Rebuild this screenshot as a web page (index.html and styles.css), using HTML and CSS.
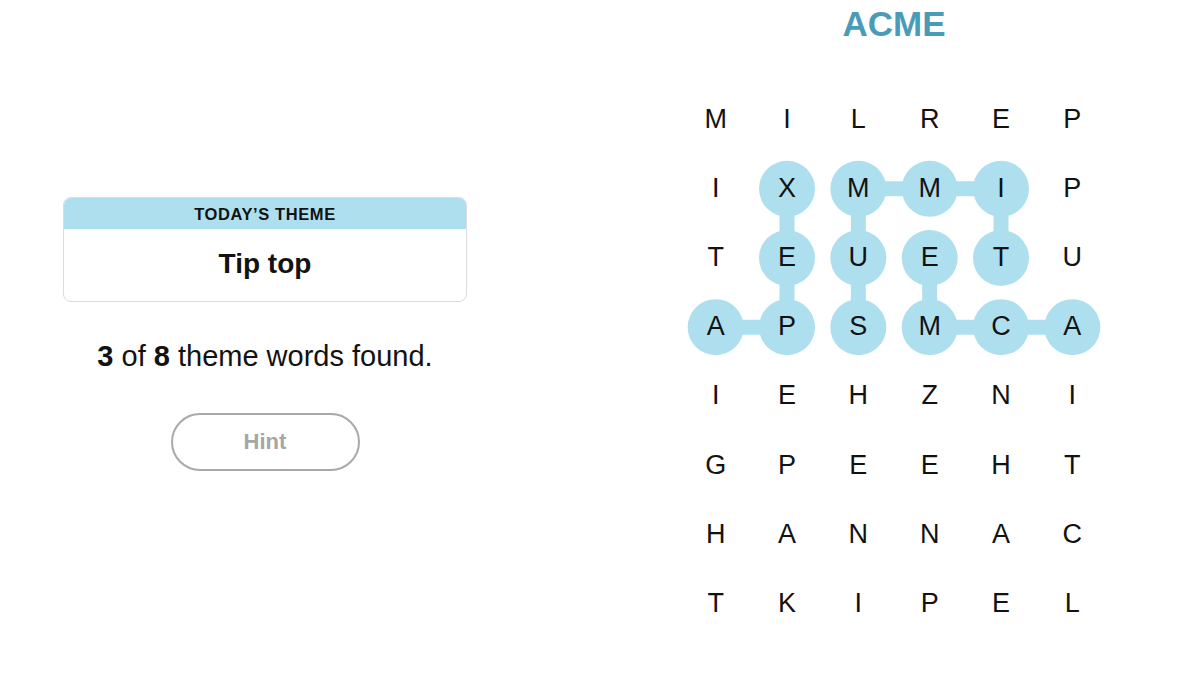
FILE: index.html
```html
<!DOCTYPE html>
<html lang="en">
<head>
<meta charset="utf-8">
<title>Strands</title>
<link rel="stylesheet" href="styles.css">
</head>
<body>
<div class="page">
  <section class="left">
    <div class="theme-card">
      <div class="theme-head">TODAY’S THEME</div>
      <div class="theme-body">Tip top</div>
    </div>
    <p class="progress"><b>3</b> of <b>8</b> theme words found.</p>
    <button class="hint" type="button">Hint</button>
  </section>
  <section class="right">
    <h1 class="title">ACME</h1>
    <div class="board">
      <svg class="paths" viewBox="0 0 428 553.6" width="428" height="553.6" aria-hidden="true">
        <g stroke="#aedfee" stroke-width="15" stroke-linecap="butt">
          <line x1="35.67" y1="242.2" x2="107" y2="242.2"/>
          <line x1="107" y1="242.2" x2="107" y2="103.8"/>
          <line x1="178.33" y1="242.2" x2="178.33" y2="103.8"/>
          <line x1="178.33" y1="103.8" x2="321" y2="103.8"/>
          <line x1="321" y1="103.8" x2="321" y2="173"/>
          <line x1="249.67" y1="173" x2="249.67" y2="242.2"/>
          <line x1="249.67" y1="242.2" x2="392.33" y2="242.2"/>
        </g>
        <g fill="#aedfee">
          <circle cx="107" cy="103.8" r="28"/>
          <circle cx="107" cy="173" r="28"/>
          <circle cx="107" cy="242.2" r="28"/>
          <circle cx="35.67" cy="242.2" r="28"/>
          <circle cx="178.33" cy="242.2" r="28"/>
          <circle cx="178.33" cy="173" r="28"/>
          <circle cx="178.33" cy="103.8" r="28"/>
          <circle cx="249.67" cy="103.8" r="28"/>
          <circle cx="321" cy="103.8" r="28"/>
          <circle cx="321" cy="173" r="28"/>
          <circle cx="249.67" cy="173" r="28"/>
          <circle cx="249.67" cy="242.2" r="28"/>
          <circle cx="321" cy="242.2" r="28"/>
          <circle cx="392.33" cy="242.2" r="28"/>
        </g>
      </svg>
      <div class="letters">
        <span>M</span><span>I</span><span>L</span><span>R</span><span>E</span><span>P</span>
        <span>I</span><span>X</span><span>M</span><span>M</span><span>I</span><span>P</span>
        <span>T</span><span>E</span><span>U</span><span>E</span><span>T</span><span>U</span>
        <span>A</span><span>P</span><span>S</span><span>M</span><span>C</span><span>A</span>
        <span>I</span><span>E</span><span>H</span><span>Z</span><span>N</span><span>I</span>
        <span>G</span><span>P</span><span>E</span><span>E</span><span>H</span><span>T</span>
        <span>H</span><span>A</span><span>N</span><span>N</span><span>A</span><span>C</span>
        <span>T</span><span>K</span><span>I</span><span>P</span><span>E</span><span>L</span>
      </div>
    </div>
  </section>
</div>
</body>
</html>
```

FILE: styles.css
```css
html, body {
  margin: 0;
  padding: 0;
  background: #ffffff;
}

body {
  font-family: "Liberation Sans", Arial, sans-serif;
  color: #121212;
  width: 1200px;
  height: 675px;
  overflow: hidden;
}

.page {
  display: flex;
  width: 1200px;
  height: 675px;
}

.left {
  width: 530px;
  flex: none;
  display: flex;
  flex-direction: column;
  align-items: center;
  padding-top: 197px;
  box-sizing: border-box;
}

.theme-card {
  width: 404px;
  border: 1px solid #dcdcdc;
  border-radius: 8px;
  overflow: hidden;
  box-sizing: border-box;
}

.theme-head {
  background: #aedfee;
  height: 31px;
  line-height: 32px;
  text-align: center;
  font-size: 16.5px;
  font-weight: 700;
  letter-spacing: 0.6px;
  color: #121212;
}

.theme-body {
  height: 72px;
  line-height: 70px;
  text-align: center;
  font-size: 28px;
  font-weight: 700;
}

.progress {
  margin: 38px 0 0;
  font-size: 29px;
  line-height: 32px;
  text-align: center;
}

.progress b {
  font-weight: 700;
}

.hint {
  margin-top: 41px;
  width: 189px;
  height: 58px;
  border: 2px solid #a9a9a9;
  border-radius: 29px;
  background: #ffffff;
  color: #a6a6a6;
  font-family: "Liberation Sans", Arial, sans-serif;
  font-size: 22px;
  font-weight: 700;
  padding: 0;
}

.right {
  flex: 1;
  display: flex;
  flex-direction: column;
  align-items: center;
  padding-left: 58px;
}

.title {
  margin: 0;
  font-size: 35px;
  line-height: 48px;
  font-weight: 700;
  color: #4a9bb7;
}

.board {
  position: relative;
  margin-top: 36.5px;
  width: 428px;
  height: 553.6px;
}

.paths {
  position: absolute;
  left: 0;
  top: 0;
}

.letters {
  position: relative;
  display: grid;
  grid-template-columns: repeat(6, 71.33px);
  grid-template-rows: repeat(8, 69.2px);
}

.letters span {
  display: flex;
  align-items: center;
  justify-content: center;
  font-size: 27px;
  line-height: 1;
  color: #121212;
}
```
